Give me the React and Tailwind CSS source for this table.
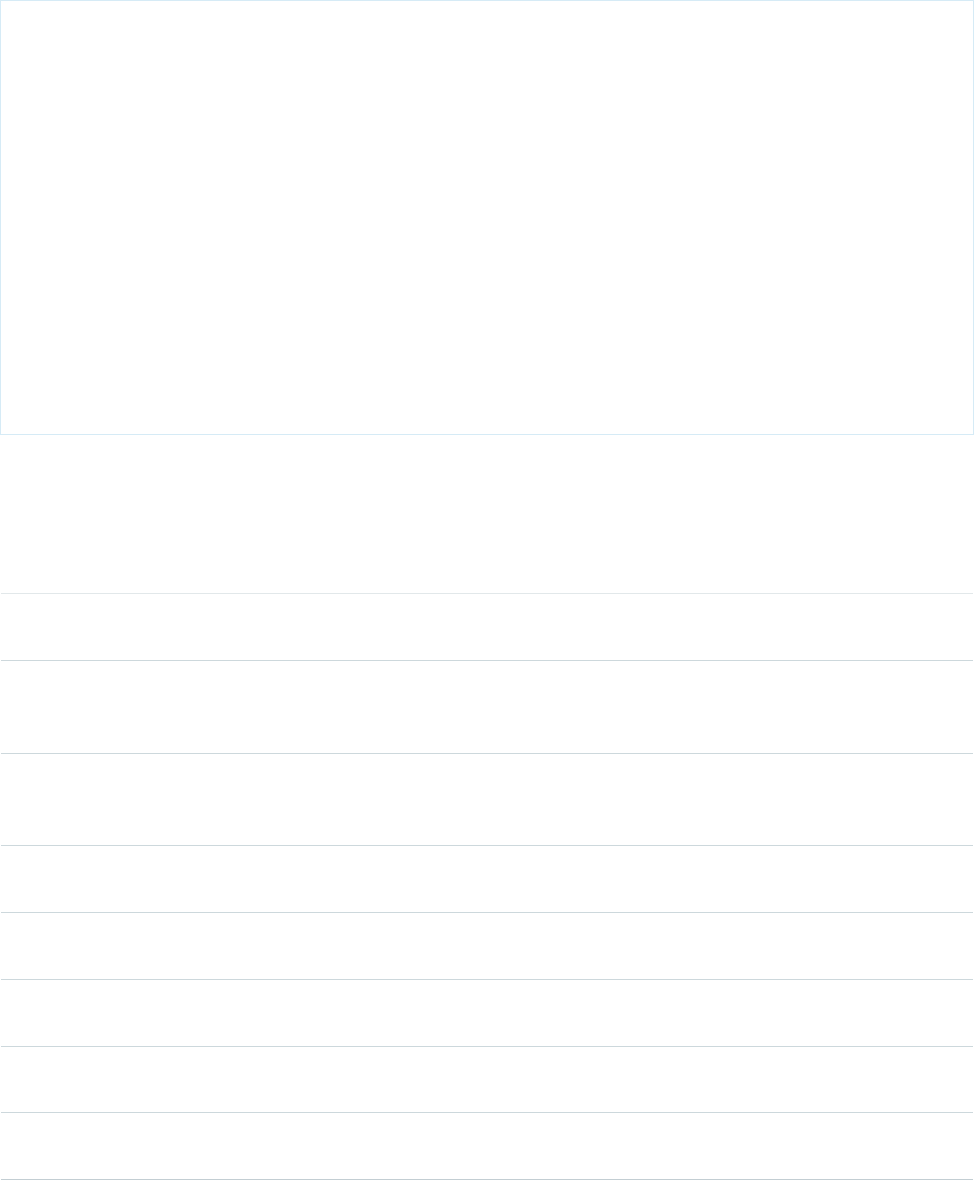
import React from 'react'

const rows = [67, 93, 92, 67, 67, 67, 66, 67]

function App() {
  return (
    <div className="min-h-screen w-[974px] bg-white font-['Liberation_Sans',sans-serif]">
      <div className="h-[435px] w-[974px] border border-[#d6ebf6] bg-white"></div>
      <div className="mt-[158px] mx-px border-t border-[#e2e8ea]">
        {rows.map((h, i) => (
          <div
            key={i}
            className="border-b border-[#cdd8dc] last:border-[#c3ced3]"
            style={{ height: h }}
          ></div>
        ))}
      </div>
    </div>
  )
}

export default App
